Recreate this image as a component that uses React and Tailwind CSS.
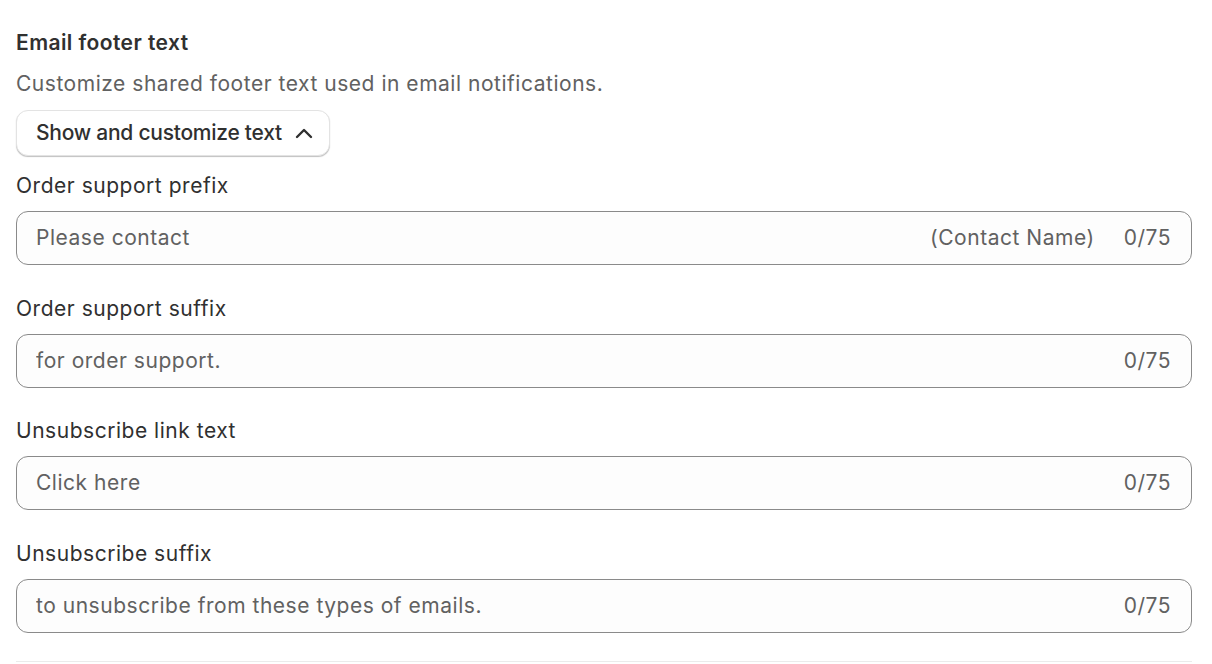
const fields = [
  { label: 'Order support prefix', placeholder: 'Please contact', suffix: '(Contact Name)' },
  { label: 'Order support suffix', placeholder: 'for order support.' },
  { label: 'Unsubscribe link text', placeholder: 'Click here' },
  { label: 'Unsubscribe suffix', placeholder: 'to unsubscribe from these types of emails.' },
]

export default function App() {
  return (
    <div
      className="min-h-screen bg-white pl-4 pr-5 pt-[28px] text-[21px] tracking-[0.025em] text-[#303030]"
      style={{ fontFamily: 'Inter, "Noto Sans", sans-serif' }}
    >
      <h2 className="h-[30px] font-semibold leading-[30px] tracking-[0.02em]">Email footer text</h2>
      <p className="mt-[11px] h-[30px] leading-[30px] text-[#616161]">
        Customize shared footer text used in email notifications.
      </p>
      <button
        type="button"
        className="mt-[11px] flex h-[46px] items-center gap-[13px] rounded-[12px] border border-[#e3e3e3] bg-white pl-[19px] pr-[16px] font-medium tracking-[-0.012em] shadow-[0_1px_1px_rgba(0,0,0,0.25)]"
      >
        Show and customize text
        <svg width="18" height="11" viewBox="0 0 18 11" fill="none" stroke="currentColor" strokeWidth="2.4" strokeLinecap="round" strokeLinejoin="round">
          <polyline points="2,9 9,2 16,9" />
        </svg>
      </button>

      {fields.map((f, i) => (
        <div key={f.label} className={i === 0 ? 'mt-[15px]' : 'mt-[28.5px]'}>
          <label className="block h-[30px] leading-[30px]">{f.label}</label>
          <div className="mt-[10px] flex h-[54px] items-center rounded-[12px] border border-[#8a8a8a] bg-[#fdfdfd] pl-[19px] pr-[20px]">
            <input
              className="min-w-0 flex-1 bg-transparent tracking-[0.025em] text-[#303030] outline-none placeholder:text-[#616161]"
              placeholder={f.placeholder}
            />
            {f.suffix && <span className="mr-[29px] text-[#616161]">{f.suffix}</span>}
            <span className="text-[#616161]">0/75</span>
          </div>
        </div>
      ))}

      <div className="mt-[28px] border-t border-[#ebebeb]" />
    </div>
  )
}
